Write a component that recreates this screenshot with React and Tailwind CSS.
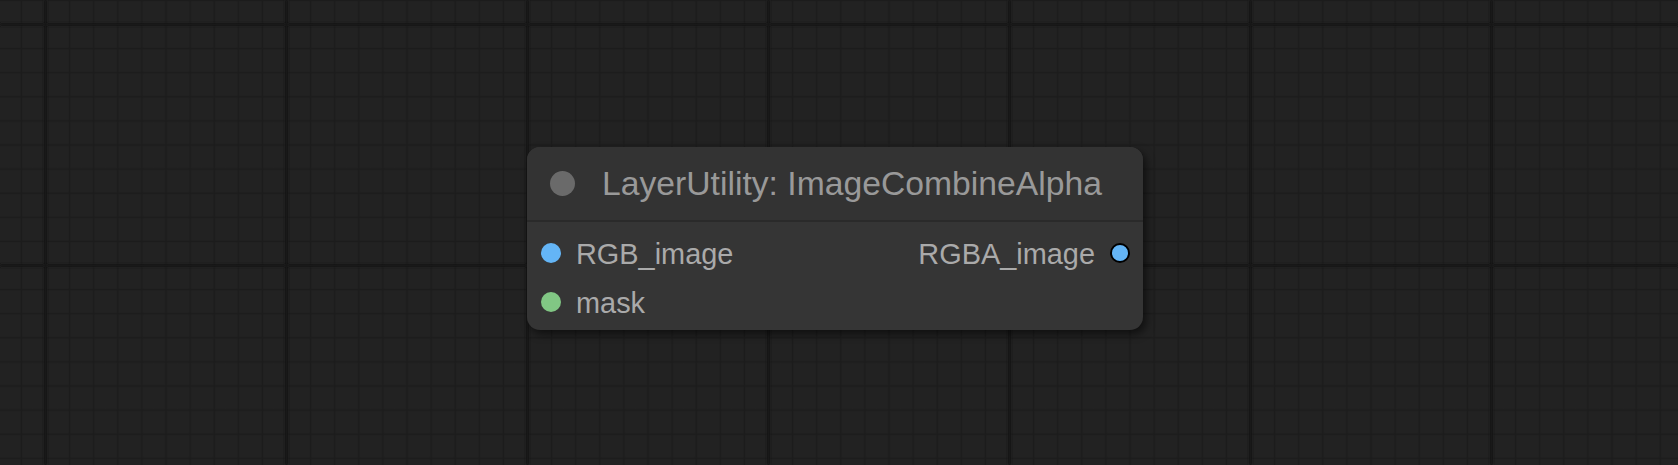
import React from 'react';

const GridBackground = () => (
  <svg className="absolute inset-0" width="1678" height="465">
    <defs>
      <pattern id="minor" x="33.45" y="12.45" width="24.1" height="24.1" patternUnits="userSpaceOnUse">
        <path d="M12.05 0V24.1M0 12.05H24.1" stroke="#1c1c1c" strokeWidth="1.6" fill="none" />
      </pattern>
      <pattern id="major" x="-75" y="-96" width="241" height="241" patternUnits="userSpaceOnUse">
        <path d="M120.5 0V241M0 120.5H241" stroke="#151515" strokeWidth="3.2" fill="none" />
      </pattern>
      <filter id="soft">
        <feGaussianBlur stdDeviation="0.9" />
      </filter>
    </defs>
    <rect width="1678" height="465" fill="url(#minor)" />
    <rect width="1678" height="465" fill="url(#major)" filter="url(#soft)" />
  </svg>
);

const Slot = ({ label, color, side = 'left' }) => {
  const dot = (
    <span
      className={`w-5 h-5 rounded-full shrink-0 ${side === 'right' ? 'border-2 border-black' : ''}`}
      style={{ backgroundColor: color }}
    />
  );
  return (
    <div className={`flex items-center gap-[15px] ${side === 'right' ? 'justify-end' : ''}`}>
      {side === 'left' && dot}
      <span className="mt-[4px] text-[28.9px] leading-none text-[#aaaaaa]">{label}</span>
      {side === 'right' && dot}
    </div>
  );
};

export default function App() {
  return (
    <div
      className="relative w-[1678px] h-[465px] overflow-hidden bg-[#222222]"
      style={{ fontFamily: '"Liberation Sans", Arial, sans-serif' }}
    >
      <GridBackground />

      {/* node */}
      <div className="absolute left-[527px] top-[147px] w-[616px] h-[183px] rounded-[13px] bg-[#353535] overflow-hidden shadow-[3px_4px_8px_rgba(0,0,0,0.55)]">
        <div className="h-[75px] bg-[#333333] border-b-2 border-[#2a2a2a] flex items-center pl-[23px] gap-[27px]">
          <span className="w-[25px] h-[25px] rounded-full bg-[#6a6a6a]" />
          <span className="mt-[1px] text-[33.7px] leading-none text-[#999999] whitespace-nowrap">
            LayerUtility: ImageCombineAlpha
          </span>
        </div>

        <div className="grid grid-cols-2 pt-[6px] pl-[14px] pr-[13px]">
          <div className="flex flex-col">
            <div className="h-[49px] flex items-center">
              <Slot label="RGB_image" color="#64b5f6" />
            </div>
            <div className="h-[49px] flex items-center">
              <Slot label="mask" color="#81c784" />
            </div>
          </div>
          <div className="flex flex-col">
            <div className="h-[49px] flex items-center justify-end">
              <Slot label="RGBA_image" color="#64b5f6" side="right" />
            </div>
          </div>
        </div>
      </div>
    </div>
  );
}
